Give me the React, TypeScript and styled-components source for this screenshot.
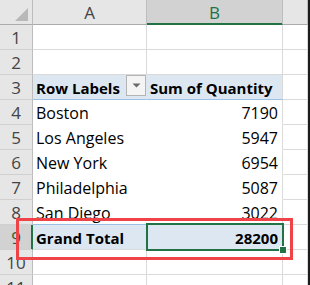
import React from "react";
import styled, { createGlobalStyle, css } from "styled-components";

const Global = createGlobalStyle`
  html, body { margin: 0; padding: 0; background: #ffffff; }
  * { box-sizing: border-box; }
`;

const Frame = styled.div`
  position: relative;
  width: 310px;
  height: 285px;
  overflow: hidden;
  border-right: 2px solid #1c1c1c;
  font-family: "Open Sans", "Liberation Sans", sans-serif;
  font-size: 16px;
  color: #000;
`;

const Sheet = styled.div`
  display: grid;
  grid-template-columns: 33px 114px 136px 25px;
  grid-auto-rows: 25px;
`;

const Corner = styled.div`
  background: #e6e6e6;
  border-right: 1px solid #bdbdbd;
  border-bottom: 1px solid #ababab;
  display: flex;
`;

const ColHeader = styled.div<{ $selected?: boolean }>`
  background: ${(p) => (p.$selected ? "#d2d2d2" : "#e6e6e6")};
  color: ${(p) => (p.$selected ? "#217346" : "#444444")};
  border-right: 1px solid #bdbdbd;
  border-bottom: 1px solid ${(p) => (p.$selected ? "#217346" : "#ababab")};
  ${(p) => p.$selected && css`box-shadow: inset 0 -1px 0 #217346;`}
  display: flex;
  align-items: center;
  justify-content: center;
  font-size: 17px;
  padding-top: 1px;
`;

const RowHeader = styled.div<{ $selected?: boolean }>`
  background: ${(p) => (p.$selected ? "#d2d2d2" : "#e6e6e6")};
  color: ${(p) => (p.$selected ? "#1f5e3a" : "#444444")};
  border-right: 1px solid ${(p) => (p.$selected ? "#217346" : "#bdbdbd")};
  border-bottom: 1px solid #d0d0d0;
  ${(p) => p.$selected && css`box-shadow: inset -1px 0 0 #217346;`}
  display: flex;
  align-items: center;
  justify-content: center;
  font-size: 17px;
  padding-top: 1px;
`;

type Variant = "plain" | "head" | "body" | "last" | "total";

const Cell = styled.div<{ $variant: Variant; $col: "A" | "B" | "C"; $right?: boolean; $bold?: boolean }>`
  position: relative;
  display: flex;
  align-items: flex-end;
  justify-content: ${(p) => (p.$right ? "flex-end" : "flex-start")};
  padding: 0 4px 1px 3px;
  white-space: nowrap;
  font-weight: ${(p) => (p.$bold ? 700 : 400)};
  font-size: ${(p) => (p.$bold ? "15px" : "16px")};
  line-height: 20px;
  background: ${(p) => (p.$variant === "head" || p.$variant === "total" ? "#dde7f2" : "#ffffff")};
  border-right: 1px solid
    ${(p) => {
      if (p.$col === "A" && p.$variant !== "plain") {
        return p.$variant === "head" || p.$variant === "total" ? "#dde7f2" : "#ffffff";
      }
      return "#dadada";
    }};
  border-bottom: 1px solid
    ${(p) => {
      switch (p.$variant) {
        case "head":
        case "last":
          return "#9bc2e6";
        case "body":
          return "#ffffff";
        default:
          return "#dadada";
      }
    }};
`;

const FilterButton = styled.div`
  align-self: flex-start;
  margin-left: auto;
  margin-right: -4px;
  width: 20px;
  height: 21px;
  border: 1px solid #b4b4b4;
  background: #f4f4f4;
  display: flex;
  align-items: center;
  justify-content: center;
`;

const Selection = styled.div`
  position: absolute;
  top: -2px;
  bottom: -2px;
  left: -1px;
  right: -2px;
  border: 2px solid #217346;
  pointer-events: none;
  z-index: 1;
`;

const FillHandle = styled.div`
  position: absolute;
  right: -5px;
  bottom: -5px;
  width: 8px;
  height: 8px;
  background: #217346;
  border: 1px solid #ffffff;
`;

const Annotation = styled.div`
  position: absolute;
  left: 16px;
  top: 218px;
  width: 277px;
  height: 42px;
  border: 3px solid #ef4348;
  pointer-events: none;
`;

const rows: { city: string; qty: string }[] = [
  { city: "Boston", qty: "7190" },
  { city: "Los Angeles", qty: "5947" },
  { city: "New York", qty: "6954" },
  { city: "Philadelphia", qty: "5087" },
  { city: "San Diego", qty: "3022" },
];

export default function App() {
  return (
    <>
      <Global />
      <Frame>
        <Sheet>
          <Corner>
            <svg width="32" height="24" viewBox="0 0 32 24">
              <polygon points="15,21 28,21 28,8" fill="#b8b8b8" />
            </svg>
          </Corner>
          <ColHeader>A</ColHeader>
          <ColHeader $selected>B</ColHeader>
          <ColHeader />

          {[1, 2].map((n) => (
            <React.Fragment key={n}>
              <RowHeader>{n}</RowHeader>
              <Cell $variant="plain" $col="A" />
              <Cell $variant="plain" $col="B" />
              <Cell $variant="plain" $col="C" />
            </React.Fragment>
          ))}

          <RowHeader>3</RowHeader>
          <Cell $variant="head" $col="A" $bold>
            Row Labels
            <FilterButton>
              <svg width="9" height="5" viewBox="0 0 9 5">
                <polygon points="0.5,0.5 8.5,0.5 4.5,4.5" fill="#6a6a6a" />
              </svg>
            </FilterButton>
          </Cell>
          <Cell $variant="head" $col="B" $bold>Sum of Quantity</Cell>
          <Cell $variant="plain" $col="C" />

          {rows.map((r, i) => {
            const v: Variant = i === rows.length - 1 ? "last" : "body";
            return (
              <React.Fragment key={r.city}>
                <RowHeader>{i + 4}</RowHeader>
                <Cell $variant={v} $col="A">{r.city}</Cell>
                <Cell $variant={v} $col="B" $right>{r.qty}</Cell>
                <Cell $variant="plain" $col="C" />
              </React.Fragment>
            );
          })}

          <RowHeader $selected>9</RowHeader>
          <Cell $variant="total" $col="A" $bold>Grand Total</Cell>
          <Cell $variant="total" $col="B" $bold $right>
            28200
            <Selection>
              <FillHandle />
            </Selection>
          </Cell>
          <Cell $variant="plain" $col="C" />

          {[10, 11].map((n) => (
            <React.Fragment key={n}>
              <RowHeader>{n}</RowHeader>
              <Cell $variant="plain" $col="A" />
              <Cell $variant="plain" $col="B" />
              <Cell $variant="plain" $col="C" />
            </React.Fragment>
          ))}
        </Sheet>
        <Annotation />
      </Frame>
    </>
  );
}
